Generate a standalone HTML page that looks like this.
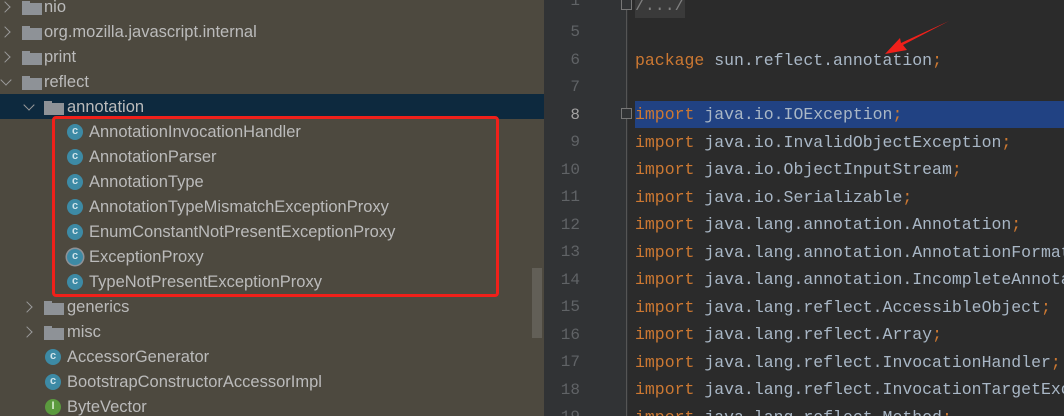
<!DOCTYPE html>
<html style="overflow:hidden"><head><style>
html,body{overflow:hidden}
body{margin:0;width:1064px;height:416px;overflow:hidden;background:#2b2b2b;position:relative;font-family:"Liberation Sans",sans-serif}
#left{position:absolute;left:0;top:0;width:544px;height:416px;background:#4d493f;overflow:hidden}
.row{position:absolute;left:0;width:544px;height:25px;color:#bbbbbb;font-size:16.5px;line-height:25px}
.row span{position:absolute;white-space:nowrap}
.arr{position:absolute;width:7px;height:7px;border-right:1.6px solid #9a9a9a;border-bottom:1.6px solid #9a9a9a}
.fold{position:absolute;width:20px;height:14px;top:6px}
.fold:before{content:"";position:absolute;left:0;top:0;width:8px;height:3px;background:#8e9297}
.fold:after{content:"";position:absolute;left:0;top:2px;width:20px;height:12px;background:#8e9297}
.ci{position:absolute;width:16px;height:16px;border-radius:50%;background:#3d8aa5;top:4px;color:#cfe3ea;font-size:11px;line-height:15px;text-align:center;font-weight:bold}
#gut{position:absolute;left:544px;top:0;width:84px;height:416px;background:#313335}
.ln{position:absolute;width:60px;text-align:right;font-family:"Liberation Mono",monospace;font-size:16px;color:#606366}
.code{position:absolute;left:635px;font-family:"Liberation Mono",monospace;font-size:16.5px;color:#a9b7c6;white-space:pre;height:27px;line-height:27px}
.k{color:#cc7832}
#wrap{position:absolute;left:0;top:0;width:1064px;height:416px;overflow:hidden}
</style></head><body><div id="wrap">
<div id="left">
<div style="position:absolute;left:0;top:94px;width:544px;height:25px;background:#0d293e"></div>
<div class="row" style="top:-5px"><div class="arr" style="left:1px;top:8px;transform:rotate(-45deg)"></div><div class="fold" style="left:22px"></div><span style="left:44px">nio</span></div>
<div class="row" style="top:20px"><div class="arr" style="left:1px;top:8px;transform:rotate(-45deg)"></div><div class="fold" style="left:22px"></div><span style="left:44px">org.mozilla.javascript.internal</span></div>
<div class="row" style="top:45px"><div class="arr" style="left:1px;top:8px;transform:rotate(-45deg)"></div><div class="fold" style="left:22px"></div><span style="left:44px">print</span></div>
<div class="row" style="top:70px"><div class="arr" style="left:2px;top:6px;transform:rotate(45deg)"></div><div class="fold" style="left:22px"></div><span style="left:44px">reflect</span></div>
<div class="row" style="top:95px"><div class="arr" style="left:25px;top:6px;transform:rotate(45deg)"></div><div class="fold" style="left:44px"></div><span style="left:67px">annotation</span></div>
<div class="row" style="top:120px"><div class="ci" style="left:67px">c</div><span style="left:89px">AnnotationInvocationHandler</span></div>
<div class="row" style="top:145px"><div class="ci" style="left:67px">c</div><span style="left:89px">AnnotationParser</span></div>
<div class="row" style="top:170px"><div class="ci" style="left:67px">c</div><span style="left:89px">AnnotationType</span></div>
<div class="row" style="top:195px"><div class="ci" style="left:67px">c</div><span style="left:89px">AnnotationTypeMismatchExceptionProxy</span></div>
<div class="row" style="top:220px"><div class="ci" style="left:67px">c</div><span style="left:89px">EnumConstantNotPresentExceptionProxy</span></div>
<div class="row" style="top:245px"><div class="ci" style="left:67px;box-shadow:0 0 0 1.5px #8e9297">c</div><span style="left:89px">ExceptionProxy</span></div>
<div class="row" style="top:270px"><div class="ci" style="left:67px">c</div><span style="left:89px">TypeNotPresentExceptionProxy</span></div>
<div class="row" style="top:295px"><div class="arr" style="left:23px;top:8px;transform:rotate(-45deg)"></div><div class="fold" style="left:44px"></div><span style="left:67px">generics</span></div>
<div class="row" style="top:320px"><div class="arr" style="left:23px;top:8px;transform:rotate(-45deg)"></div><div class="fold" style="left:44px"></div><span style="left:67px">misc</span></div>
<div class="row" style="top:345px"><div class="ci" style="left:45px">c</div><span style="left:67px">AccessorGenerator</span></div>
<div class="row" style="top:370px"><div class="ci" style="left:45px">c</div><span style="left:67px">BootstrapConstructorAccessorImpl</span></div>
<div class="row" style="top:395px"><div class="ci" style="left:45px;background:#5b9a3e;color:#d8ecd0">I</div><span style="left:67px">ByteVector</span></div>
<div style="position:absolute;left:52px;top:116px;width:441px;height:175px;border:3px solid #f0201a;border-radius:4px"></div>
<div style="position:absolute;left:532px;top:268px;width:10px;height:70px;background:#625f57"></div>
</div>
<div id="gut"></div>
<div style="position:absolute;left:626px;top:0;width:1px;height:416px;background:#555"></div>
<div style="position:absolute;left:635px;top:101px;width:429px;height:27px;background:#214283"></div>
<div style="position:absolute;left:635px;top:-8px;width:50px;height:26px;background:#3a3a3a"></div>
<div style="position:absolute;left:621px;top:-1px;width:9px;height:9px;border:1px solid #777;background:#313335"></div>
<div style="position:absolute;left:621px;top:108px;width:9px;height:9px;border:1px solid #777;background:#313335"></div>
<div class="ln" style="top:-8px;left:520px">1</div>
<div class="ln" style="top:23px;left:520px">5</div>
<div class="ln" style="top:51px;left:520px">6</div>
<div class="ln" style="top:78px;left:520px">7</div>
<div class="ln" style="top:106px;left:520px;color:#a4a3a3">8</div>
<div class="ln" style="top:133px;left:520px">9</div>
<div class="ln" style="top:161px;left:520px">10</div>
<div class="ln" style="top:188px;left:520px">11</div>
<div class="ln" style="top:216px;left:520px">12</div>
<div class="ln" style="top:243px;left:520px">13</div>
<div class="ln" style="top:271px;left:520px">14</div>
<div class="ln" style="top:298px;left:520px">15</div>
<div class="ln" style="top:326px;left:520px">16</div>
<div class="ln" style="top:353px;left:520px">17</div>
<div class="ln" style="top:381px;left:520px">18</div>
<div class="ln" style="top:408px;left:520px">19</div>
<div class="code" style="top:-8px;color:#808080">/.../</div>
<div class="code" style="top:47px"><span class="k">package</span> sun.reflect.annotation<span class="k">;</span></div>
<div class="code" style="top:101px"><span class="k">import</span> java.io.IOException<span class="k">;</span></div>
<div class="code" style="top:129px"><span class="k">import</span> java.io.InvalidObjectException<span class="k">;</span></div>
<div class="code" style="top:156px"><span class="k">import</span> java.io.ObjectInputStream<span class="k">;</span></div>
<div class="code" style="top:184px"><span class="k">import</span> java.io.Serializable<span class="k">;</span></div>
<div class="code" style="top:211px"><span class="k">import</span> java.lang.annotation.Annotation<span class="k">;</span></div>
<div class="code" style="top:239px"><span class="k">import</span> java.lang.annotation.AnnotationFormatError<span class="k">;</span></div>
<div class="code" style="top:266px"><span class="k">import</span> java.lang.annotation.IncompleteAnnotationException<span class="k">;</span></div>
<div class="code" style="top:294px"><span class="k">import</span> java.lang.reflect.AccessibleObject<span class="k">;</span></div>
<div class="code" style="top:321px"><span class="k">import</span> java.lang.reflect.Array<span class="k">;</span></div>
<div class="code" style="top:349px"><span class="k">import</span> java.lang.reflect.InvocationHandler<span class="k">;</span></div>
<div class="code" style="top:376px"><span class="k">import</span> java.lang.reflect.InvocationTargetException<span class="k">;</span></div>
<div class="code" style="top:404px"><span class="k">import</span> java.lang.reflect.Method<span class="k">;</span></div>
<svg style="position:absolute;left:0;top:0" width="1064" height="416"><polygon points="949,21 903,45 907,50 885,54 900,38 901,43" fill="#f0201a"/></svg>
</div></body></html>
